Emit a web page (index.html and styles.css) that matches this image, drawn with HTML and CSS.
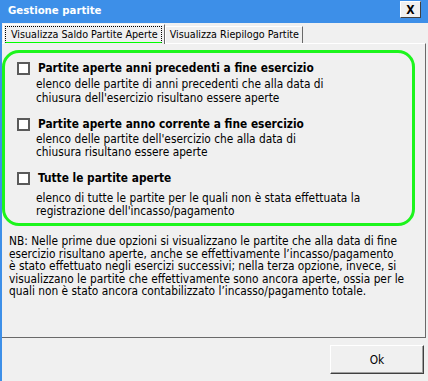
FILE: index.html
```html
<!DOCTYPE html>
<html lang="it">
<head>
    <meta charset="UTF-8">
    <title>Gestione partite</title>
    <link rel="stylesheet" href="styles.css">
</head>
<body>
    <div class="window">
        <div class="titlebar">
            <span class="title">Gestione partite</span>
            <button class="close">X</button>
        </div>

        <div class="client">
            <!-- Tab strip -->
            <div class="tabs">
                <div class="tab active"><span class="focus">Visualizza Saldo Partite Aperte</span></div>
                <div class="tab">Visualizza Riepilogo Partite</div>
            </div>

            <div class="page">
                <div class="group">
                    <div class="option first">
                        <label class="option-head"><span class="check"></span>Partite aperte anni precedenti a fine esercizio</label>
                        <p class="option-desc wide">elenco delle partite di anni precedenti che alla data di<br>chiusura dell'esercizio risultano essere aperte</p>
                    </div>
                    <div class="option">
                        <label class="option-head"><span class="check"></span>Partite aperte anno corrente a fine esercizio</label>
                        <p class="option-desc">elenco delle partite dell'esercizio che alla data di<br>chiusura risultano essere aperte</p>
                    </div>
                    <div class="option">
                        <label class="option-head"><span class="check"></span>Tutte le partite aperte</label>
                        <p class="option-desc spaced">elenco di tutte le partite per le quali non è stata effettuata la<br>registrazione dell'incasso/pagamento</p>
                    </div>
                </div>

                <p class="note">NB: Nelle prime due opzioni si visualizzano le partite che alla data di fine<br>esercizio risultano aperte, anche se effettivamente l’incasso/pagamento<br>è stato effettuato negli esercizi successivi; nella terza opzione, invece, si<br>visualizzano le partite che effettivamente sono ancora aperte, ossia per le<br>quali non è stato ancora contabilizzato l’incasso/pagamento totale.</p>
            </div>

            <div class="footer">
                <button class="ok">Ok</button>
            </div>
        </div>
    </div>
</body>
</html>
```

FILE: styles.css
```css
body {
    margin: 0;
    font-family: "DejaVu Sans Condensed", "DejaVu Sans", sans-serif;
    font-size: 11.8px;
    color: #000;
}
.window {
    width: 428px;
    height: 381px;
    background-color: #3d8fe8;
    display: flex;
    flex-direction: column;
}
.titlebar {
    height: 23px;
    display: flex;
    align-items: center;
    justify-content: space-between;
    padding: 0 7px 0 8px;
    flex-shrink: 0;
}
.title {
    color: #fff;
    font-weight: bold;
    font-size: 11.3px;
    margin-top: -2px;
}
.close {
    width: 21px;
    height: 17px;
    margin-top: -4px;
    padding: 0;
    background-color: #f0f0f0;
    border: 1px solid;
    border-color: #fff #404040 #404040 #fff;
    font-family: inherit;
    font-weight: bold;
    font-size: 12px;
    line-height: 14px;
    color: #000;
}
.client {
    flex: 1;
    margin-left: 2px;
    background-color: #f0f0f0;
}

/* tabs */
.tabs {
    height: 20px;
    display: flex;
    align-items: flex-end;
    padding-left: 1px;
    font-size: 10.7px;
}
.tab {
    height: 16px;
    padding: 0 3px 0 4px;
    border: 1px solid;
    border-color: #fff #696969 transparent #fff;
    border-bottom: none;
    line-height: 15px;
    white-space: nowrap;
}
.tab.active {
    height: 19px;
    padding: 0 2px 0 1px;
    margin-bottom: -1px;
    background-color: #f0f0f0;
    position: relative;
    z-index: 1;
}
.focus {
    display: block;
    margin-top: 1px;
    height: 15px;
    padding: 0 3px 0 5px;
    border: 1px dotted #000;
    border-bottom-color: #0f0;
    border-bottom-style: solid;
    line-height: 15px;
}
.page {
    height: 293px;
    margin-right: 2px;
    border: 1px solid;
    border-color: #fff #696969 #696969 #fff;
    border-left: none;
}

/* green frame */
.group {
    width: 407px;
    height: 170px;
    margin-top: 6px;
    border: 3px solid #1cf51c;
    border-radius: 17px;
}
.option {
    margin-top: 11px;
}
.option.first {
    margin-top: 7px;
}
.option-head {
    display: flex;
    align-items: center;
    height: 16px;
    padding-left: 12px;
    font-weight: bold;
    font-size: 11.8px;
    white-space: nowrap;
}
.check {
    width: 9px;
    height: 9px;
    margin-right: 8px;
    background-color: #fff;
    border: 2px solid #5a5a5a;
}
.option-desc {
    margin: 1px 0 0 31px;
    line-height: 13px;
    white-space: nowrap;
}
.option-desc.wide {
    line-height: 14px;
}
.option-desc.spaced {
    margin-top: 6px;
}
.note {
    margin: 9px 0 0 7px;
    font-size: 11.8px;
    line-height: 12.5px;
    white-space: nowrap;
}

/* bottom buttons */
.footer {
    display: flex;
    justify-content: flex-end;
    padding: 7px 4px 0 0;
}
.ok {
    width: 94px;
    height: 29px;
    background-color: #f0f0f0;
    border: 1px solid;
    border-color: #fff #404040 #404040 #fff;
    box-shadow: inset -1px -1px 0 #a0a0a0;
    font-family: inherit;
    font-size: 11.8px;
    color: #000;
}
```
